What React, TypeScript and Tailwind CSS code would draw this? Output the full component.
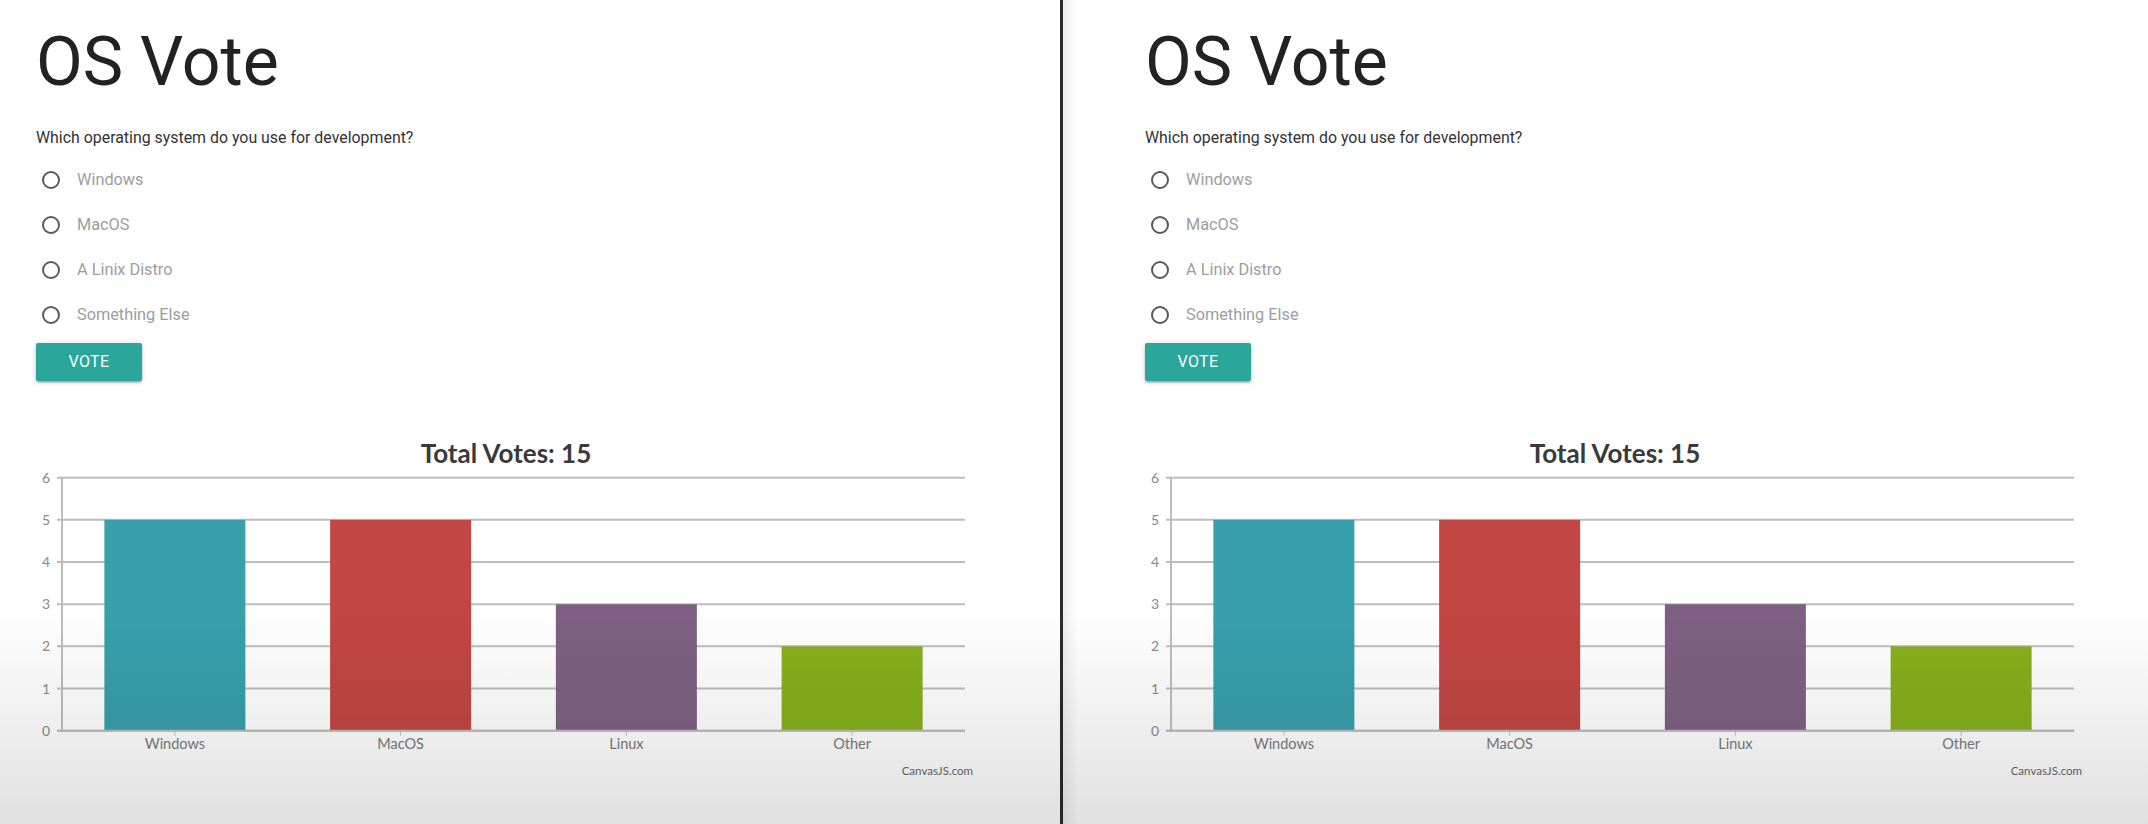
import React from "react";

const options = ["Windows", "MacOS", "A Linix Distro", "Something Else"];

const votes = [
  { label: "Windows", value: 5, color: "#389fac" },
  { label: "MacOS", value: 5, color: "#C24642" },
  { label: "Linux", value: 3, color: "#7F6084" },
  { label: "Other", value: 2, color: "#86af1c" },
];

// chart geometry (svg coords)
const plotLeft = 26;
const plotRight = 929;
const yZero = 300.7;
const step = 42.17;
const yOf = (v: number) => yZero - step * v;
const band = (plotRight - plotLeft) / votes.length;
const barWidth = 141;

function VoteChart() {
  const total = votes.reduce((s, v) => s + v.value, 0);
  return (
    <svg width="950" height="360" viewBox="0 0 950 360" className="block" fontFamily="Lato, 'Open Sans', sans-serif">
      <text x="470" y="33" textAnchor="middle" fontSize="26" fontWeight="700" fill="#3a3a3a">
        Total Votes: {total}
      </text>

      {[0, 1, 2, 3, 4, 5, 6].map((v) => (
        <g key={v}>
          <line x1="21" x2={plotRight} y1={yOf(v)} y2={yOf(v)} stroke="#bdbdbd" strokeWidth="2" />
          <text x="14" y={yOf(v) + 5} textAnchor="end" fontSize="14" fill="#8a8a8a">
            {v}
          </text>
        </g>
      ))}
      <line x1={plotLeft} x2={plotLeft} y1={yOf(6) - 1} y2={yZero + 1} stroke="#bdbdbd" strokeWidth="2" />

      {votes.map((d, i) => {
        const cx = plotLeft + band * (i + 0.5);
        return (
          <g key={d.label}>
            <rect x={cx - barWidth / 2} y={yOf(d.value)} width={barWidth} height={yZero - yOf(d.value)} fill={d.color} />
            <line x1={cx} x2={cx} y1={yZero} y2={yZero + 5} stroke="#bdbdbd" strokeWidth="1" />
            <text x={cx} y="319" textAnchor="middle" fontSize="14.5" fill="#7a7a7a">
              {d.label}
            </text>
          </g>
        );
      })}
      <line x1="21" x2={plotRight} y1={yZero} y2={yZero} stroke="#bdbdbd" strokeWidth="2" />

      <text x="937" y="345" textAnchor="end" fontSize="11.5" fill="#666">
        CanvasJS.com
      </text>
    </svg>
  );
}

function Panel() {
  return (
    <div className="pt-[25px]">
      <h1 className="text-[68px] leading-[1.1] font-normal text-[#222]">OS Vote</h1>
      <p className="mt-[26px] text-[15.9px] leading-6 text-[#333]">
        Which operating system do you use for development?
      </p>
      <div className="mt-2 flex flex-col">
        {options.map((o) => (
          <label key={o} className="flex h-[45px] items-center">
            <span className="ml-[6px] h-[18px] w-[18px] rounded-full border-2 border-[#5a5a5a]" />
            <span className="ml-[17px] text-[16.3px] text-[#9e9e9e]">{o}</span>
          </label>
        ))}
      </div>
      <button className="mt-[5px] h-[38px] w-[106px] rounded-[2px] bg-[#2aa69a] text-[16px] tracking-[0.4px] text-white shadow-[0_2px_2px_0_rgba(0,0,0,0.14),0_3px_1px_-2px_rgba(0,0,0,0.12),0_1px_5px_0_rgba(0,0,0,0.2)]">
        VOTE
      </button>
      <div className="mt-[49.6px]">
        <VoteChart />
      </div>
    </div>
  );
}

export default function App() {
  return (
    <div className="relative h-[824px] w-[2148px] overflow-hidden bg-white font-[Roboto,sans-serif]">
      <div className="flex h-full">
        <div className="w-[1060px] shrink-0 pl-[36px]">
          <Panel />
        </div>
        <div className="w-[3px] shrink-0 bg-[#2b2b2b]" />
        <div className="w-[14px] shrink-0 bg-linear-to-r from-black/[0.07] to-transparent" />
        <div className="flex-1 pl-[68px]">
          <Panel />
        </div>
      </div>
      <div className="pointer-events-none absolute inset-0 bg-linear-to-b from-transparent from-[74%] to-black/[0.12]" />
    </div>
  );
}
